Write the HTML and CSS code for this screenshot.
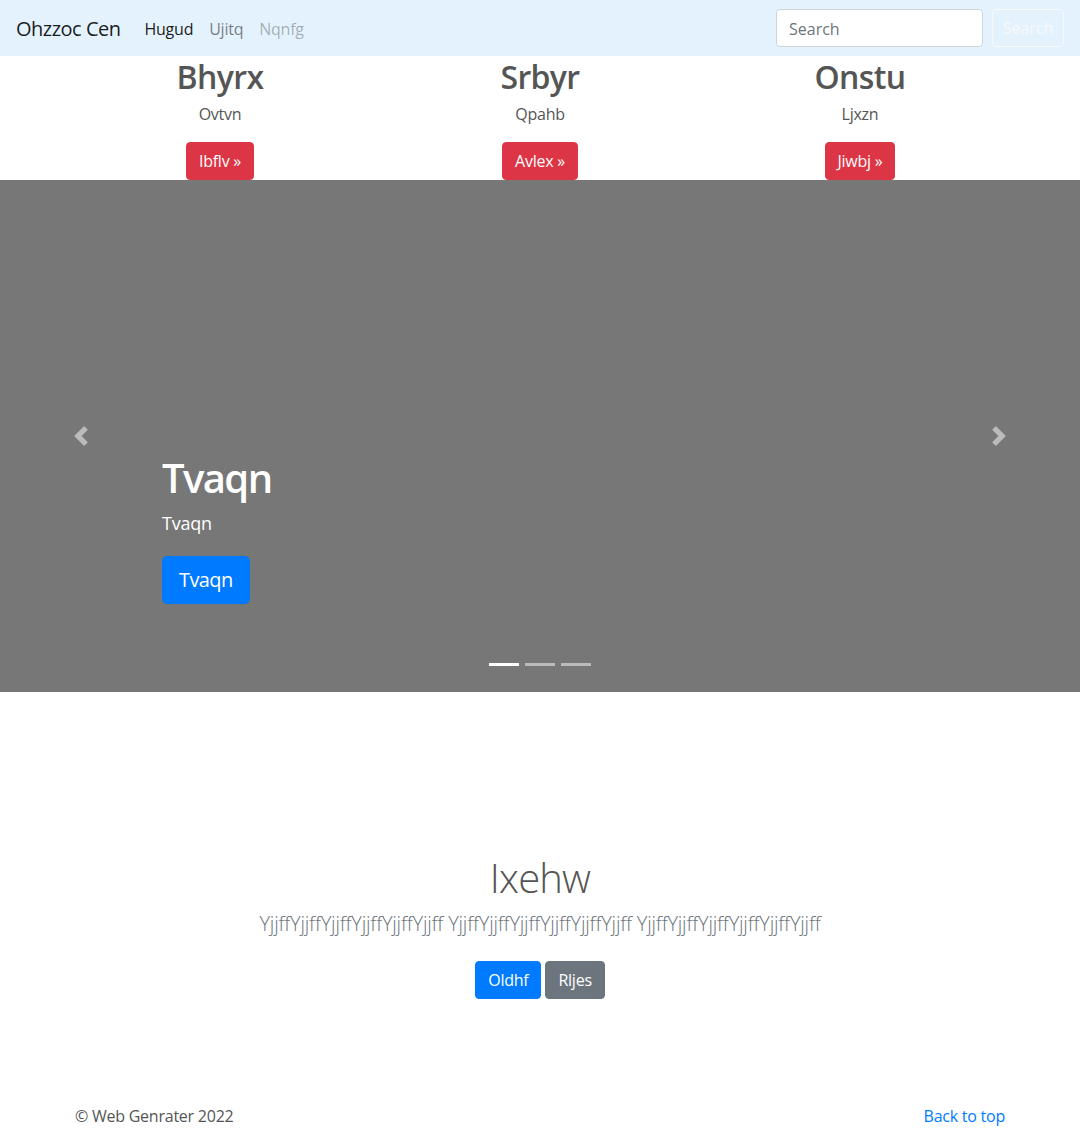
FILE: index.html
```html
<!DOCTYPE html>
<html lang="en">
<head>
<meta charset="utf-8">
<title>Ohzzoc Cen</title>
<link rel="stylesheet" href="styles.css">
</head>
<body>
<nav class="navbar">
  <a class="brand" href="#">Ohzzoc Cen</a>
  <ul class="nav">
    <li><a class="nav-link active" href="#">Hugud</a></li>
    <li><a class="nav-link" href="#">Ujitq</a></li>
    <li><a class="nav-link disabled" href="#">Nqnfg</a></li>
  </ul>
  <form class="search-form">
    <input class="search-input" type="search" placeholder="Search">
    <button class="btn btn-outline-light" type="button">Search</button>
  </form>
</nav>

<div class="container">
  <div class="row">
    <div class="col">
      <h2 class="col-title">Bhyrx</h2>
      <p class="col-text">Ovtvn</p>
      <p class="col-action"><a class="btn btn-danger" href="#">Ibflv »</a></p>
    </div>
    <div class="col">
      <h2 class="col-title">Srbyr</h2>
      <p class="col-text">Qpahb</p>
      <p class="col-action"><a class="btn btn-danger" href="#">Avlex »</a></p>
    </div>
    <div class="col">
      <h2 class="col-title">Onstu</h2>
      <p class="col-text">Ljxzn</p>
      <p class="col-action"><a class="btn btn-danger" href="#">Jiwbj »</a></p>
    </div>
  </div>
</div>

<div class="carousel">
  <div class="slide">
    <div class="caption">
      <h1 class="caption-title">Tvaqn</h1>
      <p class="caption-text">Tvaqn</p>
      <p class="caption-action"><a class="btn btn-primary btn-lg" href="#">Tvaqn</a></p>
    </div>
  </div>
  <a class="control control-prev" href="#">
    <svg width="20" height="20" viewBox="0 0 8 8" fill="#fff"><path d="M5.25 0l-4 4 4 4 1.5-1.5L4.250 4l2.5-2.5L5.25 0z"/></svg>
  </a>
  <a class="control control-next" href="#">
    <svg width="20" height="20" viewBox="0 0 8 8" fill="#fff"><path d="M2.75 0l-1.5 1.5L3.75 4l-2.5 2.5L2.75 8l4-4-4-4z"/></svg>
  </a>
  <ol class="indicators">
    <li class="active"></li>
    <li></li>
    <li></li>
  </ol>
</div>

<section class="jumbotron">
  <h1 class="jumbo-title">Ixehw</h1>
  <p class="lead">YjjffYjjffYjjffYjjffYjjffYjjff YjjffYjjffYjjffYjjffYjjffYjjff YjjffYjjffYjjffYjjffYjjffYjjff</p>
  <p class="jumbo-actions">
    <a class="btn btn-primary" href="#">Oldhf</a>
    <a class="btn btn-secondary" href="#">Rljes</a>
  </p>
</section>

<footer class="footer">
  <p class="copy">© Web Genrater 2022</p>
  <p class="back"><a href="#">Back to top</a></p>
</footer>
</body>
</html>
```

FILE: styles.css
```css
* { box-sizing: border-box; }
html, body { margin: 0; padding: 0; }
body {
  font-family: "Open Sans", "Noto Sans", sans-serif;
  font-size: 16px;
  line-height: 1.5;
  letter-spacing: -0.015em;
  color: #555;
  background: #fff;
}
a { text-decoration: none; }
p { margin: 0; }

.navbar {
  display: flex;
  align-items: center;
  background: #e3f2fd;
  padding: 8px 16px;
  height: 56px;
}
.brand {
  font-size: 20px;
  line-height: 30px;
  letter-spacing: -0.025em;
  color: rgba(0,0,0,.9);
  margin-right: 16px;
  padding: 6px 0 4px;
}
.nav {
  display: flex;
  list-style: none;
  margin: 0;
  padding: 0;
  flex: 1;
}
.nav-link {
  display: block;
  padding: 9px 8px 7px;
  color: rgba(0,0,0,.5);
}
.nav-link.active { color: rgba(0,0,0,.9); }
.nav-link.disabled { color: rgba(0,0,0,.3); }
.search-form { display: flex; align-items: center; }
.search-input {
  width: 207px;
  height: 38px;
  padding: 7px 12px 5px;
  font: inherit;
  color: #495057;
  background: #fff;
  border: 1px solid #ced4da;
  border-radius: 4px;
  margin-right: 9px;
}
.search-input::placeholder { color: #6c757d; }

.btn {
  display: inline-block;
  font: inherit;
  font-size: 16px;
  line-height: 24px;
  padding: 6px 12px;
  border: 1px solid transparent;
  border-radius: 4px;
  text-align: center;
  vertical-align: middle;
}
.btn-outline-light {
  color: #f8f9fa;
  border-color: #f8f9fa;
  background: transparent;
  width: 72px;
  padding: 6px 0;
}
.btn-danger { color: #fff; background: #dc3545; border-color: #dc3545; }
.btn-primary { color: #fff; background: #007bff; border-color: #007bff; }
.btn-secondary { color: #fff; background: #6c757d; border-color: #6c757d; }
.btn-lg { font-size: 20px; line-height: 30px; padding: 8px 16px; border-radius: 5px; }

.container { width: 960px; margin: 0 auto; padding: 0 15px; }
.row { display: flex; margin: 0 -15px; }
.col { flex: 1; padding: 0 15px; text-align: center; }
.col-title {
  margin: 2px 0 6px;
  font-size: 32px;
  line-height: 38px;
  font-weight: 600;
  letter-spacing: -0.02em;
  color: #555;
}
.col-text { margin-bottom: 16px; margin-left: 12px; margin-right: 12px; }

.carousel {
  position: relative;
  height: 512px;
  background: #777;
}
.slide { height: 100%; position: relative; }
.caption {
  position: absolute;
  left: 15%;
  right: 15%;
  bottom: 52px;
  padding: 20px 0;
  color: #fff;
  text-align: left;
}
.caption-title {
  margin: 0 0 8px;
  font-size: 40px;
  line-height: 48px;
  font-weight: 600;
  letter-spacing: -0.04em;
}
.caption-text { font-size: 18px; margin-bottom: 19px; }
.caption-action { margin-bottom: 16px; }
.caption-action .btn { letter-spacing: -0.03em; }
.control {
  position: absolute;
  top: 0;
  bottom: 0;
  width: 15%;
  display: flex;
  align-items: center;
  justify-content: center;
  opacity: .5;
}
.control-prev { left: 0; }
.control-next { right: 0; }
.indicators {
  position: absolute;
  left: 15%;
  right: 15%;
  bottom: 0;
  margin: 0 0 16px;
  padding: 0;
  list-style: none;
  display: flex;
  justify-content: center;
}
.indicators li {
  width: 30px;
  height: 3px;
  margin: 10px 3px;
  background: #fff;
  opacity: .5;
}
.indicators li.active { opacity: 1; }

.jumbotron {
  padding: 162px 0 48px;
  text-align: center;
}
.jumbo-title {
  margin: 0 0 7px;
  font-size: 40px;
  line-height: 48px;
  font-weight: 300;
  letter-spacing: -0.02em;
  color: #555;
}
.lead {
  font-size: 20px;
  line-height: 30px;
  font-weight: 300;
  letter-spacing: -0.01em;
  color: #6c757d;
  margin-bottom: 15px;
}
.jumbo-actions { margin-bottom: 16px; }
.jumbo-actions .btn { margin: 7px 0 8px; }

.footer {
  width: 960px;
  margin: 0 auto;
  padding: 33px 15px 0;
  display: flex;
  justify-content: space-between;
}
.copy { color: #555; }
.back a { color: #007bff; }
```
